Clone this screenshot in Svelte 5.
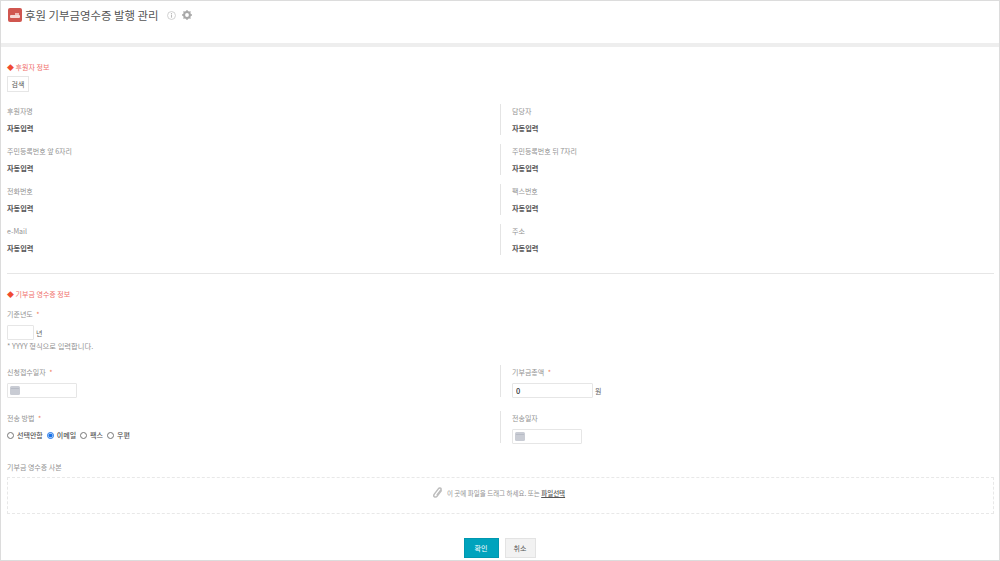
<script>
    const donor = [
        ['후원자명', '담당자'],
        ['주민등록번호 앞 6자리', '주민등록번호 뒤 7자리'],
        ['전화번호', '팩스번호'],
        ['e-Mail', '주소']
    ];
    const methods = ['선택안함', '이메일', '팩스', '우편'];
    let method = '이메일';
</script>

{#snippet cal()}
    <svg class="cal" width="10" height="9" viewBox="0 0 10 9"><rect width="10" height="9" rx="1.5" fill="#c9ccd4"/><rect x="1" y="2" width="8" height="1" fill="#b8bcc6"/></svg>
{/snippet}

<div class="page">
    <header>
        <svg class="logo" width="14" height="14" viewBox="0 0 14 14">
            <rect width="14" height="14" rx="2" fill="#d0564f"/>
            <rect x="2" y="7" width="10" height="3" rx="1" fill="#f6d9d6"/>
            <rect x="7" y="5" width="4" height="2" fill="#f0b9b4"/>
        </svg>
        <h1>후원 기부금영수증 발행 관리</h1>
        <svg class="info" width="9" height="9" viewBox="0 0 10 10">
            <circle cx="5" cy="5" r="4.4" fill="none" stroke="#cccccc"/>
            <rect x="4.4" y="4" width="1.2" height="3.4" fill="#bbbbbb"/>
            <rect x="4.4" y="2.3" width="1.2" height="1.1" fill="#bbbbbb"/>
        </svg>
        <svg class="gear" width="10" height="10" viewBox="0 0 10 10">
            <circle cx="5" cy="5" r="2.9" fill="none" stroke="#a8a8a8" stroke-width="2"/>
            <path d="M5 0v2M5 8v2M0 5h2M8 5h2M1.5 1.5l1.4 1.4M7.1 7.1l1.4 1.4M8.5 1.5L7.1 2.9M2.9 7.1L1.5 8.5" stroke="#a8a8a8" stroke-width="1.3"/>
        </svg>
    </header>

    <main>
        <h2><span class="dia">◆</span> 후원자 정보</h2>
        <button class="search">검색</button>

        <div class="grid">
            {#each donor as row}
                {#each row as label}
                    <div class="cell">
                        <div class="label">{label}</div>
                        <div class="value">자동입력</div>
                    </div>
                {/each}
            {/each}
        </div>

        <hr />

        <h2 class="second"><span class="dia">◆</span> 기부금 영수증 정보</h2>

        <div class="label year-label">기준년도 <i>*</i></div>
        <div class="inline"><input class="year" /><span>년</span></div>
        <p class="hint">* YYYY 형식으로 입력합니다.</p>

        <div class="form-grid">
            <div class="cell form">
                <div class="label">신청접수일자 <i>*</i></div>
                <div class="date">{@render cal()}</div>
            </div>
            <div class="cell form">
                <div class="label">기부금총액 <i>*</i></div>
                <div class="inline"><input class="amount" value="0" /><span>원</span></div>
            </div>
            <div class="cell form">
                <div class="label">전송 방법 <i>*</i></div>
                <div class="radios">
                    {#each methods as m}
                        <label><input type="radio" name="method" value={m} bind:group={method} />{m}</label>
                    {/each}
                </div>
            </div>
            <div class="cell form">
                <div class="label">전송일자</div>
                <div class="date">{@render cal()}</div>
            </div>
        </div>

        <div class="label file-label">기부금 영수증 사본</div>
        <div class="drop">
            <svg width="10" height="12" viewBox="0 0 10 12"><path d="M8.6 3.2L4 9.2c-.8 1-2 1.100-2.700.5-.7-.6-.7-1.700 0-2.600l4.200-5.500c.6-.8 1.500-.9 2.100-.4.6.5.6 1.300.1 2L3.900 8.300" fill="none" stroke="#bdbdbd" stroke-width="1.500"/></svg>
            <span>이 곳에 파일을 드래그 하세요. 또는 <u>파일선택</u></span>
        </div>

        <div class="actions">
            <button class="ok">확인</button>
            <button class="cancel">취소</button>
        </div>
    </main>
</div>

<style>
    :global(body) {
        margin: 0;
        background: #fff;
    }
    .page {
        width: 1000px;
        height: 561px;
        box-sizing: border-box;
        border: 1px solid #dcdcdc;
        font-family: "Noto Sans CJK KR", "Noto Sans", sans-serif;
        font-size: 7px;
        color: #555;
        overflow: hidden;
    }
    header {
        display: flex;
        align-items: flex-start;
        padding: 7px 0 0 7px;
        box-sizing: border-box;
        border-bottom: 4px solid #eeeeee;
        height: 46px;
    }
    h1 {
        margin: 0 0 0 3px;
        font-size: 11.4px;
        line-height: 14px;
        font-weight: 400;
        color: #555;
    }
    .info {
        margin: 3px 0 0 9px;
    }
    .gear {
        margin: 2px 0 0 6px;
    }
    main {
        padding: 14px 5px 0 6px;
    }
    h2 {
        margin: 0;
        font-size: 7px;
        line-height: 12px;
        font-weight: 400;
        color: #f0706a;
    }
    .dia {
        color: #f04a30;
    }
    .search {
        display: block;
        margin-top: 3px;
        width: 22px;
        height: 16px;
        padding: 0;
        background: #fff;
        border: 1px solid #e6e6e6;
        font: inherit;
        color: #555;
    }
    .grid,
    .form-grid {
        display: grid;
        grid-template-columns: 493px 1fr;
    }
    .grid {
        margin-top: 12px;
        row-gap: 9px;
    }
    .cell:nth-child(even) {
        border-left: 1px solid #e4e4e4;
        padding-left: 11px;
    }
    .cell {
        height: 31px;
    }
    .label {
        line-height: 12px;
        color: #929292;
    }
    .cell .label {
        padding-top: 1px;
    }
    i {
        font-style: normal;
        color: #f0805a;
        margin-left: 2px;
    }
    .value {
        margin-top: 5px;
        line-height: 12px;
        font-size: 7.2px;
        font-weight: 700;
        color: #555;
    }
    hr {
        margin: 18px 0 0;
        border: 0;
        border-top: 1px solid #e6e6e6;
    }
    .second {
        margin-top: 14px;
    }
    .year-label {
        margin-top: 8px;
    }
    input:not([type="radio"]) {
        box-sizing: border-box;
        border: 1px solid #e6e6e6;
        border-radius: 1px;
        height: 15px;
        padding: 0 3px;
        font: inherit;
        color: #555;
    }
    .inline {
        display: flex;
        align-items: center;
        gap: 2px;
        color: #666;
    }
    .inline span {
        margin-top: 1px;
    }
    .year-label + .inline {
        margin-top: 5px;
    }
    .year {
        width: 27px;
    }
    .hint {
        margin: 0;
        line-height: 12px;
        font-size: 7.3px;
        color: #929292;
    }
    .form-grid {
        margin-top: 13px;
        row-gap: 14px;
    }
    .form {
        height: 32px;
    }
    .form .label {
        margin-bottom: 5px;
    }
    .date {
        box-sizing: border-box;
        width: 70px;
        height: 15px;
        border: 1px solid #e6e6e6;
        border-radius: 1px;
        padding: 2px;
        display: flex;
        align-items: center;
    }
    .inline .amount {
        width: 81px;
        color: #333;
        font-size: 7.5px;
        font-weight: 500;
    }
    .radios {
        display: flex;
        gap: 4px;
        margin-top: 6px;
        font-weight: 500;
        color: #555;
    }
    .radios label {
        display: flex;
        align-items: center;
        gap: 3px;
        line-height: 10px;
    }
    .radios input {
        margin: 0;
        width: 7px;
        height: 7px;
        accent-color: #1a73e8;
    }
    .file-label {
        margin-top: 18px;
    }
    .drop {
        margin-top: 4px;
        height: 37px;
        box-sizing: border-box;
        border: 1px dashed #e8e8e8;
        padding: 0 3px 5px 0;
        display: flex;
        align-items: center;
        justify-content: center;
        gap: 4px;
        font-size: 6.5px;
        color: #929292;
    }
    .drop u {
        color: #555;
        font-weight: 500;
    }
    .actions {
        display: flex;
        justify-content: center;
        gap: 6px;
        margin-top: 24px;
        padding-right: 2px;
    }
    .actions button {
        height: 20px;
        padding: 0;
        font: inherit;
    }
    .ok {
        width: 35px;
        background: #00a3bd;
        border: 1px solid #0097af;
        color: #fff;
    }
    .cancel {
        width: 31px;
        background: #f2f2f2;
        border: 1px solid #e3e3e3;
        color: #555;
    }
</style>
